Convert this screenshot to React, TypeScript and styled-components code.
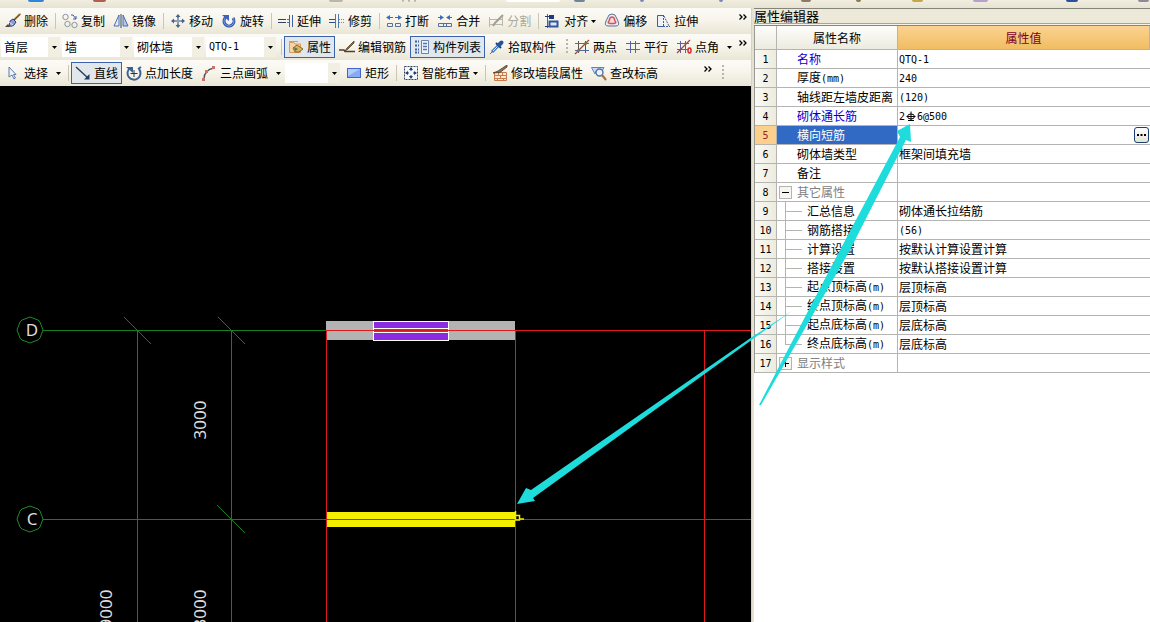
import React from "react";
import styled, { createGlobalStyle, css } from "styled-components";

const GlobalStyle = createGlobalStyle`
  *, *::before, *::after { box-sizing: border-box; }
  body { margin: 0; background: #fff; }
  body, button, select, input { font: 12px/16px "Noto Sans CJK SC", sans-serif; color: #000; }
`;

/* ---------- layout ---------- */

const Page = styled.div`
  display: flex;
  flex-direction: column;
  min-height: 100vh;
  overflow: hidden;
`;

const TopStrip = styled.div`
  display: flex;
  height: 8px;
  background: linear-gradient(#f1eedf, #e6e3d3);
`;

const Fragment = styled.span<{ $gap: number; $w: number; $c: string }>`
  flex: none;
  height: 2px;
  margin-left: ${(p) => p.$gap}px;
  width: ${(p) => p.$w}px;
  background: ${(p) => p.$c};
  border-radius: 0 0 2px 2px;
`;

const Workspace = styled.div`
  flex: 1;
  display: grid;
  grid-template-columns: minmax(0, 1fr) 398px;
`;

const Editor = styled.main`
  display: flex;
  flex-direction: column;
  min-width: 0;
  border-right: 1px solid #d6d3c4;
`;

/* ---------- toolbars ---------- */

const ToolRow = styled.div`
  display: flex;
  height: 26px;
  background: #ece9d8;
`;

const Band = styled.div<{ $grow?: boolean }>`
  display: flex;
  align-items: center;
  flex: ${(p) => (p.$grow ? "1 1 0" : "none")};
  min-width: 0;
  padding-left: 1px;
  background: linear-gradient(#fcfbf7, #f6f4ea 50%, #e9e6d5);
`;

const EndBand = styled(Band)`
  width: 35px;
`;

const ToolButton = styled.button<{ $active?: boolean }>`
  display: flex;
  align-items: center;
  flex: none;
  gap: 3px;
  height: 22px;
  padding: 0 3px;
  border: 1px solid ${(p) => (p.$active ? "#3a62ad" : "transparent")};
  background: ${(p) => (p.$active ? "#e1e7ea" : "transparent")};
  white-space: nowrap;
  &:disabled { color: #aca899; }
`;

const Divider = styled.span`
  flex: none;
  width: 1px;
  height: 16px;
  margin: 0 2px 0 3px;
  background: #c9c6b6;
`;

const Grip = styled.span`
  flex: none;
  width: 2px;
  height: 16px;
  margin: 0 2px 0 5px;
  background: repeating-linear-gradient(#b9b6a6 0 2px, transparent 2px 4px);
`;

const MoreButton = styled.button`
  align-self: flex-start;
  margin-left: auto;
  margin-right: 4px;
  padding: 0;
  width: 8px;
  height: 18px;
  border: 0;
  background: none;
  display: flex;
  align-items: center;
`;

const Combo = styled.label<{ $w: number }>`
  flex: none;
  display: grid;
  grid-template-columns: 1fr 12px;
  align-items: center;
  justify-items: center;
  width: ${(p) => p.$w}px;
  height: 20px;
  margin-right: 2px;
  background: linear-gradient(90deg, #fff calc(100% - 12px), #f1eee2 0);
  svg { grid-area: 1 / 2; pointer-events: none; }
  select {
    grid-area: 1 / 1 / 2 / 3;
    width: 100%;
    height: 20px;
    padding: 0 0 0 3px;
    border: 0;
    border-radius: 0;
    background: none;
    appearance: none;
  }
`;

const MonoSelect = styled.select`
  && { font: 10px/16px "DejaVu Sans Mono", monospace; }
`;

const Arrow = () => (
  <svg width="5" height="3" viewBox="0 0 5 3"><path d="M0 0H5L2.500 3Z" fill="#000" /></svg>
);

const More = () => (
  <MoreButton aria-label="more">
    <svg width="8" height="6" viewBox="0 0 8 6" fill="none" stroke="#000" strokeWidth="1.300">
      <path d="M0.500 0.500L3 3L0.500 5.500M4.500 0.500L7 3L4.500 5.500" />
    </svg>
  </MoreButton>
);

/* ---------- icons ---------- */

const shapes: Record<string, React.ReactNode> = {
  erase: (
    <>
      <path d="M15 1L8 8" stroke="#b5935c" strokeWidth="2.400" />
      <path d="M15.500 1L9 7" stroke="#4a3a28" />
      <path d="M5 8L8 6L11 9L9 12Q7 14 4 13Z" fill="#8c9fd4" stroke="#2f3e78" />
      <path d="M4 9L8 12" stroke="#e8e8f6" />
      <path d="M0 14H5L3 11Z" fill="#4f4638" />
    </>
  ),
  copy: (
    <>
      <circle cx="3.500" cy="4" r="2.700" stroke="#8a93a5" />
      <circle cx="5.500" cy="11" r="2.700" stroke="#8a93a5" />
      <circle cx="12.500" cy="12" r="2.700" stroke="#8a93a5" />
      <path d="M9 2H11L14 6M14 3V6H11" stroke="#3b5b9d" />
    </>
  ),
  mirror: (
    <>
      <path d="M6 2V13H1Z" stroke="#4b6cb0" fill="#e6edf8" />
      <path d="M10 2V13H15Z" stroke="#4b6cb0" fill="#b5c8ea" />
      <path d="M8 1V15" stroke="#345" />
    </>
  ),
  move: (
    <>
      <path d="M8 2V14M2 8H14" stroke="#4a6488" strokeWidth="1.500" />
      <path d="M8 1L10.500 4H5.500ZM8 15L5.500 12H10.500ZM1 8L4 5.500V10.500ZM15 8L12 10.500V5.500Z" fill="#4a6488" />
      <path d="M8 5V11M5 8H11" stroke="#b8cce4" strokeWidth="0.700" />
    </>
  ),
  rotate: (
    <>
      <path d="M5 4A5 5 0 1 0 12 5" stroke="#2f55ae" strokeWidth="3" />
      <path d="M5 4A5 5 0 1 0 12 5" stroke="#7fa4e6" strokeWidth="1" />
      <path d="M1 2H8V8Z" fill="#3c64bd" />
    </>
  ),
  extend: (
    <>
      <path d="M0 6.500H8M0 9.500H8" stroke="#2e3f66" />
      <path d="M9 6.500H11M9 9.500H11" stroke="#4f79c4" />
      <path d="M11.500 2V14M14.500 2V14" stroke="#3d62a8" />
    </>
  ),
  trim: (
    <>
      <path d="M0 6.500H6M0 9.500H6" stroke="#2e4f88" />
      <path d="M10 6.500H16M10 9.500H16" stroke="#789" strokeDasharray="1 1" />
      <path d="M6.500 1V15M9.500 1V15" stroke="#4f79b4" />
    </>
  ),
  breakLine: (
    <>
      <path d="M2 4.500H7M9 4.500H14" stroke="#3d6cb8" />
      <path d="M0 4.500L4 2V7ZM16 4.500L12 2V7Z" fill="#3d6cb8" />
      <path d="M1.500 10.500H6.500V13.500H1.500ZM9.500 10.500H14.500V13.500H9.500Z" stroke="#57719a" />
    </>
  ),
  merge: (
    <>
      <path d="M1 4.500H5M11 4.500H15" stroke="#3d6cb8" />
      <path d="M7 4.500L3 2V7ZM9 4.500L13 2V7Z" fill="#3d6cb8" />
      <path d="M1.500 10.500H14.500V13.500H1.500ZM6.500 10V13M9.500 10V13" stroke="#57719a" />
    </>
  ),
  split: (
    <>
      <path d="M1 6.500H15M1 11.500H15M1.500 4V14M14.500 4V13" stroke="#b9b6aa" />
      <path d="M15 2L7 10L5 13" stroke="#a19f95" strokeWidth="2" />
    </>
  ),
  align: (
    <>
      <path d="M2.500 1V15" stroke="#c03850" />
      <path d="M0 3.500H4M0 13.500H4" stroke="#27396d" />
      <path d="M4 2H9V6H4Z" fill="#24387c" />
      <path d="M4.500 8.500H12.500V13.500H4.500Z" stroke="#3254a0" strokeWidth="2" fill="#dfe8f6" />
    </>
  ),
  offset: (
    <>
      <path d="M5 2Q8 0 11 2L14 8Q16 13 12 13H4Q0 13 2 8Z" stroke="#5c6f98" fill="#e8edf5" />
      <path d="M6 5Q8 3 10 5L11 8Q13 10 10 10.500H6Q3 10 5 8Z" stroke="#d4525c" strokeWidth="1.500" fill="#f8dcdc" />
    </>
  ),
  stretch: (
    <>
      <path d="M8 2.500H2.500V13.500H8" stroke="#3c5f9e" fill="#eef2f8" />
      <path d="M8.500 2V14M9 3L14 13M8 13.500H15" stroke="#3c5f9e" strokeDasharray="2 1" />
    </>
  ),
  props: (
    <>
      <path d="M1.500 3.500H6L7 5H12.500V13.500H1.500Z" fill="#f9d3a4" stroke="#dd9a58" />
      <path d="M1 2.500H10" stroke="#e29b55" />
      <path d="M5 9L9 6L15 10L11 13H7Z" fill="#d8b45a" stroke="#7e6b38" />
      <path d="M6 8L10 10L7 12Z" fill="#55794d" />
    </>
  ),
  editRebar: (
    <>
      <path d="M15 2L8 9L6 12L9 10L15 4Z" fill="#8a6a45" stroke="#55432f" strokeWidth="0.800" />
      <path d="M0 11H5L6 12.500H16" stroke="#5b3a28" strokeWidth="1.400" />
    </>
  ),
  list: (
    <>
      <path d="M1 2.500H5M1 6.500H5M1 10.500H5M1 13.500H5" stroke="#3b62a9" strokeWidth="2" strokeDasharray="2 1" />
      <path d="M7.500 1.500H14.500V14.500H7.500Z" fill="#eef3fa" stroke="#6a83ac" />
      <path d="M9 4.500H13M9 7.500H13M9 10.500H13" stroke="#5473ad" strokeWidth="1.500" />
    </>
  ),
  picker: (
    <>
      <path d="M3 13L10 6" stroke="#3b78c4" strokeWidth="3" />
      <path d="M4 12L9 7" stroke="#d7ecff" strokeWidth="1" />
      <path d="M7 4L12 9" stroke="#1c3f7a" strokeWidth="2" />
      <path d="M10 6L12.500 3.500" stroke="#24549c" strokeWidth="4" strokeLinecap="round" />
      <path d="M1 15L3 13" stroke="#3b78c4" />
    </>
  ),
  twoPoint: (
    <>
      <path d="M4.500 2V14M11.500 2V14" stroke="#5a5550" />
      <path d="M1 4.500H15M1 11.500H15" stroke="#5069a4" />
      <path d="M1 15L15 1" stroke="#a34236" strokeWidth="1.200" />
      <circle cx="4.500" cy="11.500" r="1.500" fill="#697e38" />
      <circle cx="11.500" cy="4.500" r="1.500" fill="#697e38" />
    </>
  ),
  parallel: (
    <>
      <path d="M5.500 2V14M10.500 2V14" stroke="#5069a4" />
      <path d="M1 4.500H15" stroke="#b4434d" />
      <path d="M1 10.500H15" stroke="#5069a4" />
    </>
  ),
  pointAngle: (
    <>
      <path d="M4.500 2V14M9.500 2V14M1 4.500H13M1 10.500H12" stroke="#5069a4" />
      <path d="M1 14L14 1" stroke="#b34040" strokeWidth="1.200" />
      <ellipse cx="13.500" cy="11.500" rx="1.500" ry="2.500" stroke="#d82b34" strokeWidth="1.500" />
    </>
  ),
  select: (
    <path d="M4 2V12L7 10L9 14L10.500 13L8.500 9.500H11Z" fill="#eef3fb" stroke="#5e79a8" />
  ),
  line: (
    <>
      <path d="M1 2L13 13" stroke="#263c5e" strokeWidth="1.400" />
      <path d="M14.500 14.500V9L9 14.500Z" fill="#263c5e" />
    </>
  ),
  pointLength: (
    <>
      <path d="M4 3A6.500 6.500 0 1 0 13 4" stroke="#3e6193" strokeWidth="2" />
      <path d="M0 2H7V8Z" fill="#3e6193" />
      <path d="M8 5V12M4.500 8.500H11.500" stroke="#2a3340" />
      <path d="M12 4L15 2" stroke="#3e6193" strokeWidth="2" />
    </>
  ),
  arc: (
    <>
      <path d="M3 14Q3 5 13 3" stroke="#4d5564" strokeWidth="1.300" />
      <path d="M11 1H14V4H11ZM1 13H4V16H1ZM4 5H7V8H4Z" fill="#c5736b" />
    </>
  ),
  rect: (
    <>
      <rect x="1.500" y="3.500" width="13" height="9" fill="#86aaf4" stroke="#3f66c8" />
      <path d="M2 4H14L2 11Z" fill="#b5ccfb" />
    </>
  ),
  smart: (
    <>
      <rect x="1.500" y="1.500" width="13" height="13" stroke="#33415c" strokeDasharray="2 1" fill="#f4f6fa" />
      <path d="M8 3V6M8 10V13M3 8H6M10 8H13" stroke="#25406e" />
      <path d="M8 2L10 5H6ZM8 14L6 11H10ZM2 8L5 6V10ZM14 8L11 10V6Z" fill="#25406e" />
    </>
  ),
  wallEdit: (
    <>
      <path d="M2.500 7.500H14.500V15.500H2.500ZM3 10.500H14M3 13.500H14M6.500 8V10M10.500 8V10M8.500 11V13M5.500 13V15M11.500 13V15" stroke="#c97c4b" fill="#fbe6d4" />
      <path d="M15 0L6 6L1 8L8 7.500L15 2Z" fill="#8c7350" stroke="#4d4030" strokeWidth="0.800" />
    </>
  ),
  elevation: (
    <>
      <path d="M0.500 2.500H13L11 6H5L4 9Z" fill="#c9ddf5" stroke="#6483b8" />
      <circle cx="8.500" cy="7.500" r="3.500" fill="#e8f3fd" stroke="#5473a5" strokeWidth="1.400" />
      <path d="M11 10L15 15" stroke="#a9713f" strokeWidth="2.200" />
    </>
  ),
};

const Icon = ({ name }: { name: string }) => (
  <svg width="16" height="16" viewBox="0 0 16 16" fill="none" aria-hidden="true">{shapes[name]}</svg>
);

type ToolProps = { icon: string; label: string; active?: boolean; disabled?: boolean; menu?: boolean };

const Tool = ({ icon, label, active, disabled, menu }: ToolProps) => (
  <ToolButton $active={active} disabled={disabled}>
    <Icon name={icon} />
    {label}
    {menu && <Arrow />}
  </ToolButton>
);

const MenuButton = styled.button`
  display: flex;
  align-items: center;
  justify-content: center;
  flex: none;
  width: 13px;
  height: 22px;
  padding: 0;
  border: 0;
  background: none;
`;

const SplitTool = (props: ToolProps) => (
  <>
    <Tool {...props} />
    <MenuButton aria-label={props.label}><Arrow /></MenuButton>
  </>
);

/* ---------- drawing ---------- */

const Canvas = styled.div`
  flex: 1;
  display: flex;
  background: #000;
  svg { flex: 1; min-width: 0; height: auto; }
  text { font: 17px "Noto Sans", sans-serif; fill: #dcdcdc; text-anchor: middle; }
`;

const Bubble = ({ y, name }: { y: number; name: string }) => (
  <g transform={`translate(30 ${y})`}>
    <polygon
      points="0,-13 8,-10 10,-8 13,0 10,8 8,10 0,13 -8,10 -10,8 -13,0 -10,-8 -8,-10"
      stroke="#1f8a2c"
      fill="none"
    />
    <text x="2" y="6">{name}</text>
  </g>
);

const Dimension = ({ x, y, value }: { x: number; y: number; value: string }) => (
  <text transform={`translate(${x} ${y}) rotate(-90)`}>{value}</text>
);

const Plan = () => (
  <Canvas>
    <svg fill="none">
      <g stroke="#14801f">
        <path d="M43 244.500H326M43 433.500H326" />
        <line x1="137.500" y1="244" x2="137.500" y2="100%" />
        <line x1="231.500" y1="244" x2="231.500" y2="100%" />
        <path d="M124 231L151 258M218 231L245 258M217 419L245 447" />
      </g>
      <Bubble y={244} name="D" />
      <Bubble y={433} name="C" />
      <Dimension x={206} y={334} value="3000" />
      <Dimension x={206} y={523} value="3000" />
      <Dimension x={112} y={523} value="9000" />
      <rect x="326" y="235" width="189" height="19" fill="#b3b3b3" />
      <rect x="373.500" y="235.500" width="75" height="19" fill="#8a2be2" stroke="#fff" />
      <rect x="373.500" y="242.500" width="75" height="4" fill="#b02c78" stroke="#fff" />
      <rect x="327" y="426" width="188" height="15" fill="#f4ee00" />
      <g stroke="#e01a1a">
        <line x1="326" y1="244.500" x2="100%" y2="244.500" />
        <line x1="326" y1="433.500" x2="100%" y2="433.500" />
        <line x1="326.500" y1="244" x2="326.500" y2="100%" />
        <line x1="515.500" y1="244" x2="515.500" y2="100%" />
        <line x1="704.500" y1="244" x2="704.500" y2="100%" />
      </g>
      <path d="M515.500 425V434H519.500V429.500H515M519 433H524" stroke="#f4ee00" strokeWidth="1.500" />
    </svg>
  </Canvas>
);

/* ---------- property panel ---------- */

const Panel = styled.aside`
  position: relative;
  background: #fff;
  border-left: 2px solid #e4e1d2;
`;

const PanelTitle = styled.h2`
  height: 18px;
  margin: 0;
  border-top: 1px solid #85857c;
  border-bottom: 1px solid #85857c;
  background: #ece9d8;
  font-size: 13px;
  font-weight: 400;
  line-height: 14px;
  white-space: nowrap;
  box-shadow: inset 0 -1px #f6f4ea, inset 0 -2px #a5a598;
`;

const Sheet = styled.div`
  border-left: 1px solid #9a9a92;
`;

const Table = styled.table`
  width: 100%;
  border-collapse: separate;
  border-spacing: 0;
  table-layout: fixed;
`;

const NumCol = styled.col`
  width: 22px;
`;

const NameCol = styled.col`
  width: 121px;
`;

const cell = css`
  padding: 0;
  height: 19px;
  border-right: 1px solid #b4b4b0;
  border-bottom: 1px solid #b4b4b0;
  font-weight: 400;
  line-height: 16px;
  white-space: nowrap;
`;

const HeadCell = styled.th<{ $selected?: boolean }>`
  ${cell}
  height: 24px;
  color: ${(p) => (p.$selected ? "#7b0028" : "#000")};
  background: ${(p) =>
    p.$selected ? "linear-gradient(#fbd391, #f0bd62)" : "linear-gradient(#fdfdfb, #edebdf)"};
`;

const NumCell = styled.th<{ $selected?: boolean }>`
  ${cell}
  color: ${(p) => (p.$selected ? "#a02020" : "#000")};
  background: ${(p) => (p.$selected ? "#fbd08c" : "linear-gradient(90deg, #fafaf6, #edebdd)")};
`;

const NameCell = styled.td<{ $tone?: string }>`
  ${cell}
  color: ${(p) =>
    p.$tone === "key" ? "#0000d0" : p.$tone === "group" ? "#808080" : p.$tone === "picked" ? "#fff" : "#000"};
  background: ${(p) => (p.$tone === "picked" ? "#316ac5" : "#fff")};
`;

const NameInner = styled.div`
  display: flex;
  align-items: center;
  height: 18px;
`;

const Gutter = styled.span<{ $wide?: boolean }>`
  flex: none;
  display: flex;
  align-items: center;
  width: ${(p) => (p.$wide ? 30 : 20)}px;
  height: 19px;
  padding-left: ${(p) => (p.$wide ? 8 : 2)}px;
`;

const Branch = styled.span<{ $last?: boolean }>`
  width: 17px;
  height: 19px;
  background:
    linear-gradient(#b4b4b0, #b4b4b0) 0 0 / 1px ${(p) => (p.$last ? "10px" : "100%")} no-repeat,
    linear-gradient(#b4b4b0, #b4b4b0) 0 9px / 100% 1px no-repeat;
`;

const Toggle = styled.button`
  display: flex;
  align-items: center;
  justify-content: center;
  width: 13px;
  height: 13px;
  padding: 0;
  border: 1px solid #b4b4b0;
  background: #f6f5f0;
`;

const ValueCell = styled.td`
  ${cell}
  border-right: 0;
  padding-left: 1px;
`;

const ValueInner = styled.div`
  display: flex;
  align-items: center;
  height: 18px;
  padding-right: 1px;
`;

const Half = styled.span`
  font: 10px/16px "DejaVu Sans Mono", monospace;
`;

const BrowseButton = styled.button`
  display: flex;
  align-items: center;
  justify-content: center;
  width: 15px;
  height: 16px;
  margin-left: auto;
  padding: 0;
  border: 1px solid #1c3f6e;
  border-radius: 3px;
  background: linear-gradient(#fff, #e4e2d8);
`;

const Callouts = styled.svg`
  position: absolute;
  top: 0;
  left: -240px;
  width: 400px;
  height: 520px;
  pointer-events: none;
`;

const RebarMark = () => (
  <svg width="12" height="11" viewBox="0 0 12 11" fill="none" stroke="#000">
    <ellipse cx="6" cy="5.500" rx="3.500" ry="2.500" />
    <path d="M6 0.500V10M1.500 5.500H10.500M3 9.500H9" />
  </svg>
);

/* Half-width characters are set in the narrow fixed-pitch face. */
const Mixed = ({ text }: { text: string }) => (
  <span>
    {text.split(/([\x21-\x7e]+)/).map((part, i) => (i % 2 ? <Half key={i}>{part}</Half> : part))}
  </span>
);

type Row = { name: string; value?: string; tone?: string; tree?: "open" | "closed" | "leaf" | "last" };

const rows: Row[] = [
  { name: "名称", value: "QTQ-1", tone: "key" },
  { name: "厚度(mm)", value: "240" },
  { name: "轴线距左墙皮距离", value: "(120)" },
  { name: "砌体通长筋", value: "2|6@500", tone: "key" },
  { name: "横向短筋", tone: "picked" },
  { name: "砌体墙类型", value: "框架间填充墙" },
  { name: "备注" },
  { name: "其它属性", tone: "group", tree: "open" },
  { name: "汇总信息", value: "砌体通长拉结筋", tree: "leaf" },
  { name: "钢筋搭接", value: "(56)", tree: "leaf" },
  { name: "计算设置", value: "按默认计算设置计算", tree: "leaf" },
  { name: "搭接设置", value: "按默认搭接设置计算", tree: "leaf" },
  { name: "起点顶标高(m)", value: "层顶标高", tree: "leaf" },
  { name: "终点顶标高(m)", value: "层顶标高", tree: "leaf" },
  { name: "起点底标高(m)", value: "层底标高", tree: "leaf" },
  { name: "终点底标高(m)", value: "层底标高", tree: "last" },
  { name: "显示样式", tone: "group", tree: "closed" },
];

const PropertyRow = ({ row, index }: { row: Row; index: number }) => {
  const child = row.tree === "leaf" || row.tree === "last";
  const picked = row.tone === "picked";
  const [before, after] = (row.value ?? "").split("|");
  return (
    <tr>
      <NumCell scope="row" $selected={picked}><Half>{index + 1}</Half></NumCell>
      <NameCell $tone={row.tone}>
        <NameInner>
          <Gutter $wide={child}>
            {child && <Branch $last={row.tree === "last"} />}
            {(row.tree === "open" || row.tree === "closed") && (
              <Toggle aria-label={row.name}>
                <svg width="7" height="7" viewBox="0 0 7 7" stroke="#000">
                  <path d={row.tree === "open" ? "M0 3.500H7" : "M0 3.500H7M3.500 0V7"} />
                </svg>
              </Toggle>
            )}
          </Gutter>
          <Mixed text={row.name} />
        </NameInner>
      </NameCell>
      <ValueCell>
        <ValueInner>
          <Mixed text={before} />
          {after && <RebarMark />}
          {after && <Mixed text={after} />}
          {picked && (
            <BrowseButton aria-label={row.name}>
              <svg width="9" height="2" viewBox="0 0 9 2"><path d="M0 0H2V2H0ZM3.500 0H5.500V2H3.500ZM7 0H9V2H7Z" /></svg>
            </BrowseButton>
          )}
        </ValueInner>
      </ValueCell>
    </tr>
  );
};

const fragments: [number, number, string][] = [
  [28, 16, "#2f87d8"],
  [49, 13, "#b0604c"],
  [223, 14, "#b9b7ac"],
  [59, 2, "#b9b7ac"],
  [4, 2, "#b9b7ac"],
  [4, 2, "#b9b7ac"],
  [90, 54, "#ffffff"],
  [14, 11, "#6d8799"],
  [55, 4, "#7c86b4"],
  [75, 4, "#7c86b4"],
  [78, 10, "#8a7a68"],
  [45, 5, "#8a7a50"],
  [51, 11, "#c6a64c"],
  [50, 15, "#b8a0cc"],
  [78, 12, "#2c519c"],
  [60, 11, "#8d8b9a"],
];

export default function App() {
  return (
    <Page>
      <GlobalStyle />
      <TopStrip>
        {fragments.map(([gap, w, c], i) => <Fragment key={i} $gap={gap} $w={w} $c={c} />)}
      </TopStrip>
      <Workspace>
        <Editor>
          <ToolRow>
            <Band $grow>
              <Tool icon="erase" label="删除" />
              <Divider />
              <Tool icon="copy" label="复制" />
              <Tool icon="mirror" label="镜像" />
              <Divider />
              <Tool icon="move" label="移动" />
              <Tool icon="rotate" label="旋转" />
              <Divider />
              <Tool icon="extend" label="延伸" />
              <Tool icon="trim" label="修剪" />
              <Divider />
              <Tool icon="breakLine" label="打断" />
              <Tool icon="merge" label="合并" />
              <Tool icon="split" label="分割" disabled />
              <Divider />
              <Tool icon="align" label="对齐" menu />
              <Tool icon="offset" label="偏移" />
              <Tool icon="stretch" label="拉伸" />
              <More />
            </Band>
          </ToolRow>
          <ToolRow>
            <Band>
              <Combo $w={59}><select aria-label="楼层"><option>首层</option></select><Arrow /></Combo>
              <Combo $w={70}><select aria-label="类别"><option>墙</option></select><Arrow /></Combo>
              <Combo $w={70}><select aria-label="类型"><option>砌体墙</option></select><Arrow /></Combo>
              <Combo $w={70}><MonoSelect aria-label="构件"><option>QTQ-1</option></MonoSelect><Arrow /></Combo>
              <Divider />
              <Tool icon="props" label="属性" active />
              <Tool icon="editRebar" label="编辑钢筋" />
              <Tool icon="list" label="构件列表" active />
              <Tool icon="picker" label="拾取构件" />
            </Band>
            <Band $grow>
              <Grip />
              <Tool icon="twoPoint" label="两点" />
              <Tool icon="parallel" label="平行" />
              <SplitTool icon="pointAngle" label="点角" />
              <More />
            </Band>
          </ToolRow>
          <ToolRow>
            <Band $grow>
              <SplitTool icon="select" label="选择" />
              <Divider />
              <Tool icon="line" label="直线" active />
              <Tool icon="pointLength" label="点加长度" />
              <SplitTool icon="arc" label="三点画弧" />
              <Combo $w={55}><select aria-label="画法"><option></option></select><Arrow /></Combo>
              <Tool icon="rect" label="矩形" />
              <Divider />
              <Tool icon="smart" label="智能布置" menu />
              <Divider />
              <Tool icon="wallEdit" label="修改墙段属性" />
              <Tool icon="elevation" label="查改标高" />
              <More />
            </Band>
            <EndBand>
              <Grip />
            </EndBand>
          </ToolRow>
          <Plan />
        </Editor>
        <Panel>
          <PanelTitle>属性编辑器</PanelTitle>
          <Sheet>
            <Table>
              <colgroup>
                <NumCol />
                <NameCol />
                <col />
              </colgroup>
              <thead>
                <tr>
                  <HeadCell aria-label="序号" />
                  <HeadCell scope="col">属性名称</HeadCell>
                  <HeadCell scope="col" $selected>属性值</HeadCell>
                </tr>
              </thead>
              <tbody>
                {rows.map((row, i) => <PropertyRow key={row.name} row={row} index={i} />)}
              </tbody>
            </Table>
          </Sheet>
          <Callouts viewBox="514 8 400 520" fill="#1edcdc">
            <path d="M517 504L526 488L531 490L752 337L792 311L753 339L533 498L535 501Z" />
            <path d="M910 124L897 131L900 137L840 250L759 405L761 405L850 250L906 140L911 142Z" />
          </Callouts>
        </Panel>
      </Workspace>
    </Page>
  );
}
